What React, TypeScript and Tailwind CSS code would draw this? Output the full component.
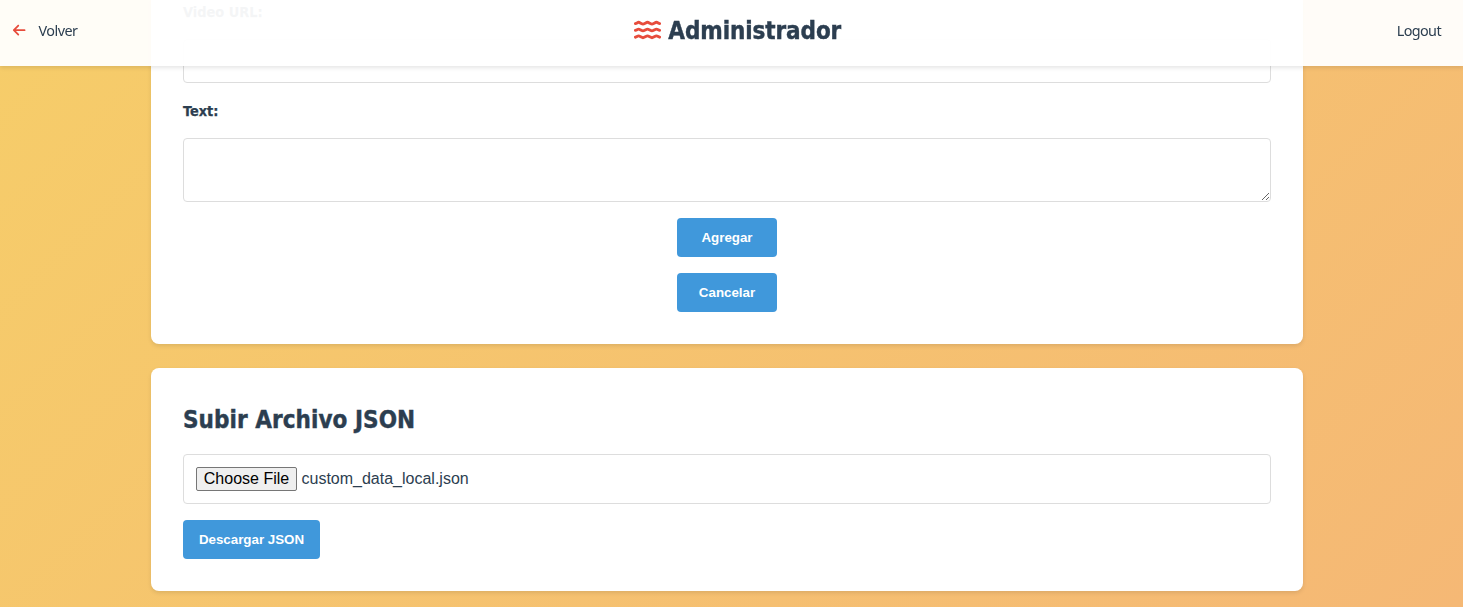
import { FaArrowLeft } from "react-icons/fa6";

const input = "block w-full rounded-[4px] border border-[#dddddd] bg-white";
const button =
  "h-[39px] rounded-[4px] bg-[#4098db] font-['Liberation_Sans',sans-serif] text-[13.333px] leading-[15px] font-bold text-white";
const label =
  "block text-[14.4px] leading-[24px] font-bold [-webkit-text-stroke:0.25px_currentColor]";

function Waves() {
  return (
    <svg
      viewBox="0 0 27 20"
      className="h-[20px] w-[27px] text-[#e74c3c]"
      fill="none"
      stroke="currentColor"
      strokeWidth="2.9"
      strokeLinecap="round"
    >
      {[3.2, 10, 16.8].map((y) => (
        <path
          key={y}
          d={`M1.4 ${y + 0.4}C2.6 ${y + 0.2} 3.6 ${y - 0.9} 4.6 ${y - 0.9}S7.9 ${y + 0.9} 9 ${y + 0.9}S12.4 ${y - 0.9} 13.5 ${y - 0.9}S16.9 ${y + 0.9} 18 ${y + 0.9}S21.3 ${y - 0.9} 22.4 ${y - 0.9}S24.6 ${y + 0.2} 25.6 ${y + 0.4}`}
        />
      ))}
    </svg>
  );
}

function Header() {
  return (
    <header className="fixed inset-x-0 top-0 z-10 grid h-[66px] grid-cols-[1fr_auto_1fr] bg-white/95 pt-[12px] pr-[22px] pb-[18px] pl-[12px] shadow-[0_2px_4px_rgba(0,0,0,0.1)]">
      <a
        href="#"
        className="flex h-[36px] items-center gap-[12px] pt-[1px] font-['Noto_Sans',sans-serif] text-[14.4px] tracking-[-0.5px]"
      >
        <FaArrowLeft className="size-[14.4px] text-[#e74c3c]" />
        <span>Volver</span>
      </a>
      <h1 className="ml-[22px] flex h-[36px] items-center gap-[7.5px] text-[24px] leading-[36px] font-bold tracking-[-0.1px] [-webkit-text-stroke:0.4px_currentColor]">
        <Waves />
        <span className="pt-[1px]">Administrador</span>
      </h1>
      <a
        href="#"
        className="flex h-[36px] items-center justify-end pt-[1px] font-['Noto_Sans',sans-serif] text-[14.4px] tracking-[-0.6px]"
      >
        Logout
      </a>
    </header>
  );
}

export default function App() {
  return (
    <div className="h-[607px] overflow-hidden bg-[linear-gradient(135deg,#f6cd69,#f5b875)] font-['DejaVu_Sans_Condensed','DejaVu_Sans',sans-serif] [font-stretch:condensed] text-[#2c3e50]">
      <Header />
      <main className="ml-[151px] flex w-[1152px] flex-col gap-[24px]">
        <form className="h-[344px] rounded-b-[8px] bg-white px-[32px] shadow-[0_2px_4px_rgba(0,0,0,0.1)]">
          <label htmlFor="video" className={label}>
            Video URL:
          </label>
          <input id="video" className={`${input} mt-[15px] h-[44px]`} />
          <label htmlFor="text" className={`${label} mt-[16px]`}>
            Text:
          </label>
          <textarea id="text" className={`${input} mt-[15px] h-[64px] resize-y`} />
          <div className="mt-[16px] flex flex-col items-center gap-[16px]">
            <button type="button" className={`${button} w-[100px]`}>
              Agregar
            </button>
            <button type="button" className={`${button} w-[100px]`}>
              Cancelar
            </button>
          </div>
        </form>
        <section className="h-[223px] rounded-[8px] bg-white px-[32px] pt-[34px] shadow-[0_2px_4px_rgba(0,0,0,0.1)]">
          <h2 className="text-[24px] leading-[36px] font-bold tracking-[0.05px] [-webkit-text-stroke:0.4px_currentColor]">
            Subir Archivo JSON
          </h2>
          <div
            className={`${input} mt-[16px] flex h-[50px] items-center gap-[4.5px] px-[12px] font-['Liberation_Sans',sans-serif] text-[16px] leading-[18px]`}
          >
            <button
              type="button"
              className="h-[24px] w-[101px] rounded-[2px] border border-[#767676] bg-[#efefef] text-black"
            >
              Choose File
            </button>
            <span>custom_data_local.json</span>
          </div>
          <button type="button" className={`${button} mt-[16px] w-[137px]`}>
            Descargar JSON
          </button>
        </section>
      </main>
    </div>
  );
}
